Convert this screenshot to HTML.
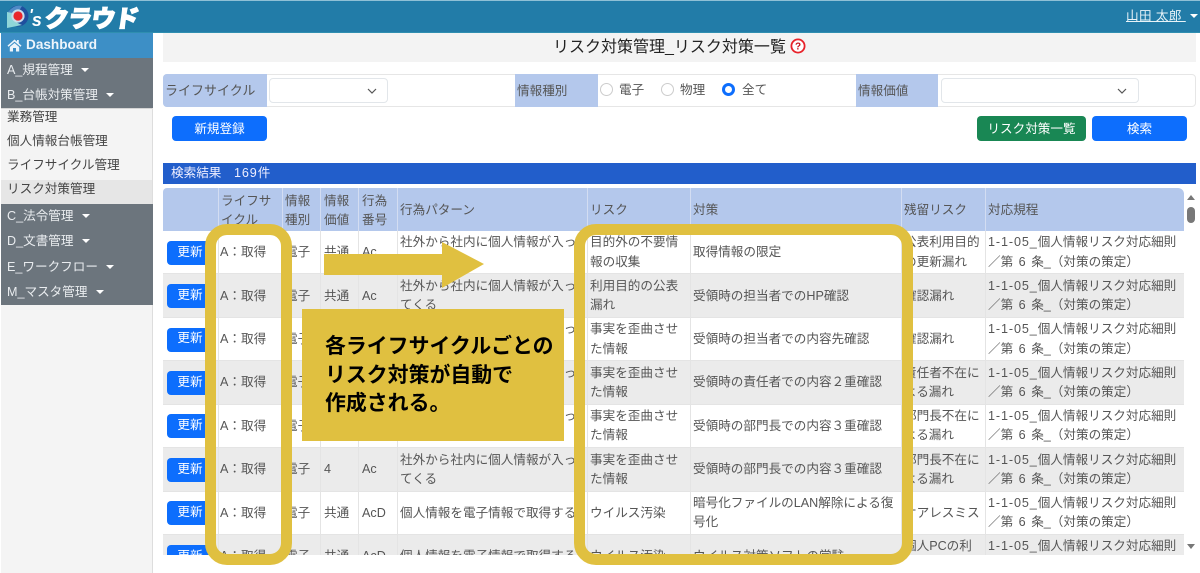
<!DOCTYPE html>
<html lang="ja"><head><meta charset="utf-8"><title>リスク対策一覧</title>
<style>
*{box-sizing:border-box}
html,body{margin:0;padding:0;width:1200px;height:573px;overflow:hidden;background:#fff}
body{font-family:"Liberation Sans","Noto Sans CJK JP",sans-serif;font-size:12.6px;color:#555;position:relative}
.a{position:absolute;white-space:nowrap}
.lb{position:absolute;background:#b4c8ec;color:#555;display:flex;align-items:center;padding:0 0 2px 2px;top:74px;height:33px}
.sel{position:absolute;top:78px;height:25px;border:1px solid #e2e6ea;border-radius:4px;background:#fff}
.sel svg{position:absolute;right:9px;top:7px}
.btn{position:absolute;top:116px;height:25px;background:#0d6efd;color:#fff;border-radius:4px;display:flex;align-items:center;justify-content:center;padding-bottom:2px}
.m{position:absolute;left:7px;color:#e9ecef;white-space:nowrap;line-height:18px}
.m i{display:inline-block;width:0;height:0;border-left:4px solid transparent;border-right:4px solid transparent;border-top:4px solid #fff;margin-left:5px;vertical-align:2px}
.s{position:absolute;left:7px;color:#444;white-space:nowrap;line-height:18px}
.r{position:absolute;top:83px;width:13px;height:13px;border-radius:50%;border:1px solid #ccc;background:#fff}
.n{letter-spacing:.9px}
.w{word-spacing:2px}
#tb{position:absolute;left:163px;top:188px;width:1021px;height:367px;overflow:hidden}
.row{display:grid;grid-template-columns:55px 64px 38px 38px 39px 190px 103px 211px 84px 199px;height:43.45px;background:#fff;border-bottom:1px solid #e4e4e4}
.row.g{background:#ebebeb}
.row.h{background:#b4c8ec;height:43px;border:0;border-top-right-radius:6px;border-top-left-radius:4px}
.row>div{display:flex;align-items:center;padding:1px 0 0 2px;line-height:19.3px;white-space:nowrap;overflow:hidden;border-left:1px solid #e4e4e4}
.row.h>div{border-left:1px solid #d3ddf2;padding-top:3px}
.row:not(.h)>div:nth-child(2){padding-left:1px}
.row>div:nth-child(4),.row>div:nth-child(5){padding-left:3px}
.row>div:first-child{border-left:0}
.row b{font-weight:400;background:#0d6efd;color:#fff;border-radius:4px;width:46px;height:24px;display:flex;align-items:center;justify-content:center;margin-left:2px;padding-bottom:1px}
.fr{position:absolute;top:224px;height:341px;border:11px solid #e0c040;border-radius:22px}
</style></head><body>
<div class="a" style="left:0;top:0;width:1200px;height:33px;background:#227ca8;border-top:1px solid #8fc0d6;border-bottom:1px solid #2f8eb0"></div>
<svg class="a" style="left:6px;top:4px" width="23" height="25" viewBox="0 0 23 25"><circle cx="12" cy="12" r="10.5" fill="#1f4f9e"/><path d="M2 8 Q8 0 16 2 L13 7 Q8 6 7 11Z" fill="#4f8ac6"/><path d="M1 8 L1 24 L16 21 Q7 18 6.5 9Z" fill="#8fd6d8"/><circle cx="12" cy="12" r="6.6" fill="#c9dcea"/><circle cx="12" cy="12" r="4.6" fill="#e9252b"/></svg>
<div class="a" style="left:29px;top:2px;color:#fff;font:italic 700 16px/24px 'Liberation Sans',sans-serif">'<span style="position:relative;top:6px;font-size:18px;left:-1px">s</span></div>
<div class="a" style="left:45px;top:0;color:#fff;font-family:'Noto Sans CJK JP',sans-serif;font-weight:900;font-size:24px;line-height:33px;letter-spacing:-.6px;transform:skewX(-8deg);-webkit-text-stroke:1.2px #fff">クラウド</div>
<div class="a" style="left:1126px;top:8px;color:#e8f3f8;text-decoration:underline;line-height:16px;letter-spacing:.4px">山田 太郎&nbsp;</div>
<div class="a" style="left:1190px;top:14px;border-left:4px solid transparent;border-right:4px solid transparent;border-top:4px solid #fff"></div>

<div class="a" style="left:1px;top:33px;width:152px;height:540px;background:#f4f4f4;border-right:1px solid #ddd"></div>
<div class="a" style="left:1px;top:33px;width:152px;height:25px;background:#3d8fc6"></div>
<svg class="a" style="left:7px;top:39px" width="15" height="13" viewBox="0 0 15 13"><path d="M7.5 0.5 L0.5 6.6 L1.5 7.7 L7.5 2.6 L13.5 7.7 L14.5 6.6 L11.8 4.2 V1 H10 V2.6Z" fill="#eef5fb"/><path d="M2.8 8 L7.5 4 L12.2 8 V12.5 H9 V9 H6 V12.5 H2.8Z" fill="#eef5fb"/></svg>
<div class="a" style="left:26px;top:36px;color:#eef5fb;font-weight:700;font-size:13.6px;line-height:18px">Dashboard</div>
<div class="a" style="left:1px;top:58px;width:152px;height:50px;background:#6c757d"></div>
<div class="a" style="left:1px;top:108px;width:151px;height:1px;background:#d5d5d5"></div>
<div class="m" style="top:61px">A_規程管理 <i></i></div>
<div class="m" style="top:86px">B_台帳対策管理 <i></i></div>
<div class="s" style="top:108px">業務管理</div>
<div class="s" style="top:132px">個人情報台帳管理</div>
<div class="s" style="top:156px">ライフサイクル管理</div>
<div class="a" style="left:1px;top:180px;width:151px;height:24px;background:#e6e6e6"></div>
<div class="s" style="top:180px">リスク対策管理</div>
<div class="a" style="left:1px;top:204px;width:152px;height:101px;background:#6c757d"></div>
<div class="m" style="top:207px">C_法令管理 <i></i></div>
<div class="m" style="top:232px">D_文書管理 <i></i></div>
<div class="m" style="top:258px">E_ワークフロー <i></i></div>
<div class="m" style="top:283px">M_マスタ管理 <i></i></div>

<div class="a" style="left:163px;top:33px;width:1033px;height:29px;background:#f3f3f3"></div>
<div class="a" style="left:553px;top:36px;font-size:16px;line-height:24px;color:#222">リスク対策管理_リスク対策一覧</div>
<svg class="a" style="left:790px;top:38px" width="16" height="16" viewBox="0 0 16 16"><circle cx="8" cy="8" r="6.6" fill="#fff" stroke="#e8222a" stroke-width="1.8"/><text x="8" y="11.5" text-anchor="middle" font-family="Liberation Sans" font-weight="700" font-size="10" fill="#c4141c">?</text></svg>

<div class="a" style="left:163px;top:74px;width:1033px;height:33px;border:1px solid #e6e6e6;border-radius:4px"></div>
<div class="lb" style="left:163px;width:104px;font-size:13px;border-radius:4px 0 0 4px">ライフサイクル</div>
<div class="sel" style="left:269px;width:119px"><svg width="12" height="10" viewBox="0 0 12 10"><path d="M2 3 L6 7 L10 3" fill="none" stroke="#555" stroke-width="1.2"/></svg></div>
<div class="lb" style="left:515px;width:83px">情報種別</div>
<div class="r" style="left:600px"></div><div class="a" style="left:619px;top:81px;line-height:18px">電子</div>
<div class="r" style="left:661px"></div><div class="a" style="left:680px;top:81px;line-height:18px">物理</div>
<div class="r" style="left:722px;border:3.5px solid #0d6efd"></div><div class="a" style="left:742px;top:81px;line-height:18px">全て</div>
<div class="lb" style="left:856px;width:82px">情報価値</div>
<div class="sel" style="left:941px;width:198px"><svg width="12" height="10" viewBox="0 0 12 10" style="right:10px"><path d="M2 3 L6 7 L10 3" fill="none" stroke="#555" stroke-width="1.2"/></svg></div>

<div class="btn" style="left:172px;width:95px">新規登録</div>
<div class="btn" style="left:977px;width:109px;background:#198754">リスク対策一覧</div>
<div class="btn" style="left:1092px;width:95px">検索</div>

<div class="a" style="left:163px;top:163px;width:1033px;height:21px;background:#225ecb;color:#eef;padding-left:8px;line-height:20px">検索結果　<span class="n">169</span>件</div>

<div id="tb">
<div class="row h"><div></div><div>ライフサ<br>イクル</div><div>情報<br>種別</div><div>情報<br>価値</div><div>行為<br>番号</div><div>行為パターン</div><div>リスク</div><div>対策</div><div>残留リスク</div><div>対応規程</div></div>
<div class="row"><div><b>更新</b></div><div>A：取得</div><div>電子</div><div>共通</div><div>Ac</div><div>社外から社内に個人情報が入っ<br>てくる</div><div>目的外の不要情<br>報の収集</div><div>取得情報の限定</div><div>公表利用目的<br>の更新漏れ</div><div><span><span class="n">1-1-05_</span>個人情報リスク対応細則<br><span class="w">／第 6 条_（対策の策定）</span></span></div></div>
<div class="row g"><div><b>更新</b></div><div>A：取得</div><div>電子</div><div>共通</div><div>Ac</div><div>社外から社内に個人情報が入っ<br>てくる</div><div>利用目的の公表<br>漏れ</div><div>受領時の担当者でのHP確認</div><div>確認漏れ</div><div><span><span class="n">1-1-05_</span>個人情報リスク対応細則<br><span class="w">／第 6 条_（対策の策定）</span></span></div></div>
<div class="row"><div><b>更新</b></div><div>A：取得</div><div>電子</div><div>共通</div><div>Ac</div><div>社外から社内に個人情報が入っ<br>てくる</div><div>事実を歪曲させ<br>た情報</div><div>受領時の担当者での内容先確認</div><div>確認漏れ</div><div><span><span class="n">1-1-05_</span>個人情報リスク対応細則<br><span class="w">／第 6 条_（対策の策定）</span></span></div></div>
<div class="row g"><div><b>更新</b></div><div>A：取得</div><div>電子</div><div>共通</div><div>Ac</div><div>社外から社内に個人情報が入っ<br>てくる</div><div>事実を歪曲させ<br>た情報</div><div>受領時の責任者での内容２重確認</div><div>責任者不在に<br>よる漏れ</div><div><span><span class="n">1-1-05_</span>個人情報リスク対応細則<br><span class="w">／第 6 条_（対策の策定）</span></span></div></div>
<div class="row"><div><b>更新</b></div><div>A：取得</div><div>電子</div><div>共通</div><div>Ac</div><div>社外から社内に個人情報が入っ<br>てくる</div><div>事実を歪曲させ<br>た情報</div><div>受領時の部門長での内容３重確認</div><div>部門長不在に<br>よる漏れ</div><div><span><span class="n">1-1-05_</span>個人情報リスク対応細則<br><span class="w">／第 6 条_（対策の策定）</span></span></div></div>
<div class="row g"><div><b>更新</b></div><div>A：取得</div><div>電子</div><div>4</div><div>Ac</div><div>社外から社内に個人情報が入っ<br>てくる</div><div>事実を歪曲させ<br>た情報</div><div>受領時の部門長での内容３重確認</div><div>部門長不在に<br>よる漏れ</div><div><span><span class="n">1-1-05_</span>個人情報リスク対応細則<br><span class="w">／第 6 条_（対策の策定）</span></span></div></div>
<div class="row"><div><b>更新</b></div><div>A：取得</div><div>電子</div><div>共通</div><div>AcD</div><div>個人情報を電子情報で取得する</div><div>ウイルス汚染</div><div>暗号化ファイルのLAN解除による復<br>号化</div><div>ケアレスミス</div><div><span><span class="n">1-1-05_</span>個人情報リスク対応細則<br><span class="w">／第 6 条_（対策の策定）</span></span></div></div>
<div class="row g"><div><b>更新</b></div><div>A：取得</div><div>電子</div><div>共通</div><div>AcD</div><div>個人情報を電子情報で取得する</div><div>ウイルス汚染</div><div>ウイルス対策ソフトの常駐</div><div>個人PCの利<br>用</div><div><span><span class="n">1-1-05_</span>個人情報リスク対応細則<br><span class="w">／第 6 条_（対策の策定）</span></span></div></div>
</div>

<div class="a" style="left:1187px;top:195px;border-left:4px solid transparent;border-right:4px solid transparent;border-bottom:5px solid #777"></div>
<div class="a" style="left:1187px;top:207px;width:8px;height:16px;background:#787878;border-radius:4px"></div>
<div class="a" style="left:1187px;top:544px;border-left:4px solid transparent;border-right:4px solid transparent;border-top:5px solid #777"></div>

<div class="fr" style="left:205px;width:87px"></div>
<div class="fr" style="left:574px;width:339px"></div>
<svg class="a" style="left:324px;top:242px" width="160" height="46" viewBox="0 0 160 46"><path d="M0 12 H118 V0 L160 22 L118 46 V33 H0Z" fill="#e0c040"/></svg>
<div class="a" style="left:302px;top:309px;width:262px;height:132px;background:#e0c040"></div>
<div class="a" style="left:325px;top:331px;color:#000;font-family:'Noto Sans CJK JP',sans-serif;font-weight:700;font-size:20.9px;line-height:28.5px">各ライフサイクルごとの<br>リスク対策が自動で<br>作成される。</div>
</body></html>
